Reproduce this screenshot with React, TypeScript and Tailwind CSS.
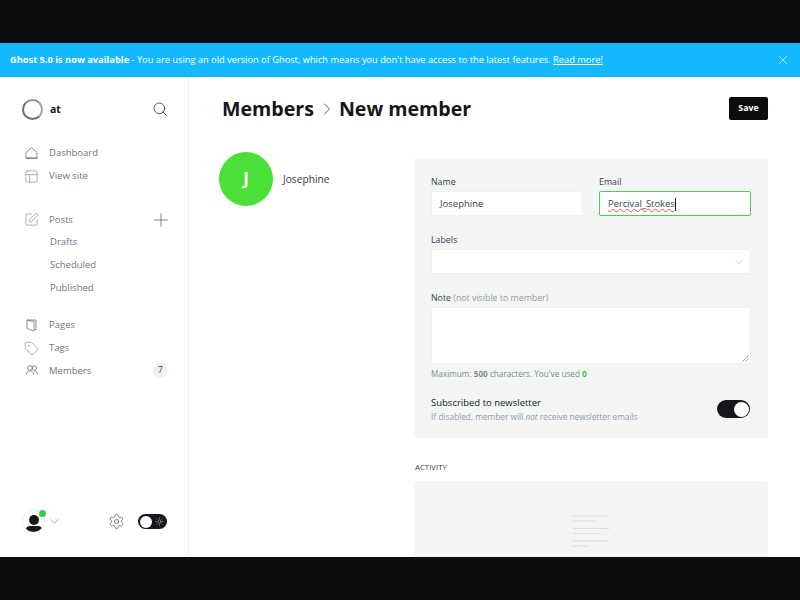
import React from 'react';
import { Search, Plus, X, ChevronDown, ChevronRight, PanelsTopLeft, SquarePen, Tag, Settings, Sun } from 'lucide-react';

const NavItem: React.FC<{ icon: React.ReactNode; label: string; right?: React.ReactNode }> = ({ icon, label, right }) => (
  <div className="flex h-[22.7px] items-center text-[9.5px] text-[#6b7580]">
    <span className="flex w-[25px] shrink-0 items-center justify-start text-[#6b7580]">{icon}</span>
    <span>{label}</span>
    {right && <span className="ml-auto flex items-center">{right}</span>}
  </div>
);

const SubItem: React.FC<{ label: string }> = ({ label }) => (
  <div className="flex h-[22.7px] items-center pl-[26px] text-[9.5px] text-[#6b7580]">{label}</div>
);

const HomeIcon = () => (
  <svg width="15" height="15" viewBox="0 0 15 15" fill="none" stroke="currentColor" strokeWidth="0.8">
    <path d="M2 6.5 L7.5 1.5 L13 6.5 V12.5 H2 Z" />
    <path d="M2 11.8 H13" />
  </svg>
);

const PagesIcon = () => (
  <svg width="15" height="15" viewBox="0 0 15 15" fill="none" stroke="currentColor" strokeWidth="0.8">
    <path d="M3 2 H12 V11.5 H10.5 M3 2 V10.5 L10 13 V3.5 L3 2" />
  </svg>
);

const MembersIcon = () => (
  <svg width="15" height="15" viewBox="0 0 15 15" fill="none" stroke="currentColor" strokeWidth="0.8">
    <circle cx="6" cy="5" r="2.3" />
    <circle cx="10.5" cy="5" r="2.3" />
    <path d="M2.5 11.5 C2.5 9 4 8 6 8 S9.5 9 9.5 11.5 M10 8 C12 8 13.5 9 13.5 11.5" />
  </svg>
);

const Sidebar = () => (
  <aside className="flex w-[189px] shrink-0 flex-col border-r border-[#eceef0] pl-[22px] pr-[20px]">
    <div className="mt-[21px] flex h-[22px] items-center">
      <span className="h-[21px] w-[21px] rounded-full border-[2.5px] border-[#6b6f73] border-t-[#8b8f93] border-r-[#a0a3a6]" />
      <span className="ml-[7px] pt-[1px] text-[10.5px] font-bold text-[#15171a]">at</span>
      <Search size={16} strokeWidth={1.1} className="ml-auto mr-[0px] text-[#15171a]" />
    </div>
    <nav className="mt-[22px] pl-[2px]">
      <NavItem icon={<HomeIcon />} label="Dashboard" />
      <NavItem icon={<PanelsTopLeft size={15} strokeWidth={0.9} />} label="View site" />
      <div className="h-[21px]" />
      <NavItem
        icon={<SquarePen size={15} strokeWidth={0.9} />}
        label="Posts"
        right={<Plus size={22} strokeWidth={0.7} className="mr-[-4px] text-[#394047]" />}
      />
      <SubItem label="Drafts" />
      <SubItem label="Scheduled" />
      <SubItem label="Published" />
      <div className="h-[15px]" />
      <NavItem icon={<PagesIcon />} label="Pages" />
      <NavItem icon={<Tag size={15} strokeWidth={0.9} />} label="Tags" />
      <NavItem
        icon={<MembersIcon />}
        label="Members"
        right={
          <span className="flex h-[15px] w-[15px] items-center justify-center rounded-full bg-[#eff1f3] text-[8.5px] text-[#394047]">7</span>
        }
      />
    </nav>
    <div className="mt-auto mb-[24px] flex items-center pr-[1px]">
      <div className="relative h-[23px] w-[23px]">
        <div className="flex h-[23px] w-[23px] flex-col items-center overflow-hidden rounded-full border border-[#f0f1f2] pt-[4px]">
          <span className="h-[10px] w-[10px] shrink-0 rounded-full bg-[#15171a]" />
          <span className="mt-[0.5px] h-[8px] w-[16px] shrink-0 rounded-full bg-[#15171a]" />
        </div>
        <span className="absolute right-[-1px] top-[0px] h-[7px] w-[7px] rounded-full bg-[#30cf43]" />
      </div>
      <ChevronDown size={15} strokeWidth={0.9} className="ml-[2px] text-[#626d79]" />
      <Settings size={17} strokeWidth={0.9} className="ml-auto text-[#394047]" />
      <div className="ml-[13px] flex h-[15px] w-[29px] items-center justify-between rounded-full bg-[#15171a] pl-[1.5px] pr-[3px]">
        <span className="h-[12px] w-[12px] rounded-full bg-white" />
        <Sun size={9} strokeWidth={1.4} className="text-[#c8ccd0]" />
      </div>
    </div>
  </aside>
);

const Label: React.FC<{ children: React.ReactNode }> = ({ children }) => (
  <div className="text-[8.8px] leading-[13px] text-[#394047]">{children}</div>
);

const MemberForm = () => (
  <section className="flex h-[280px] w-[354px] flex-col rounded-[2px] bg-[#f4f5f5] px-[17px] pt-[18px]">
    <div className="grid grid-cols-2 gap-[16px]">
      <div>
        <Label>Name</Label>
        <div className="mt-[2px] flex h-[25px] items-center rounded-[2px] border border-[#eef0f1] bg-white pl-[8px] pt-[1px] text-[9.5px] text-[#394047]">Josephine</div>
      </div>
      <div>
        <Label>Email</Label>
        <div className="mt-[2px] flex h-[25px] items-center rounded-[2px] border-[1.5px] border-[#45d04f] bg-white pl-[8px] pt-[1px] text-[9.4px] text-[#394047]">
          <span className="underline decoration-[#e25440] decoration-wavy decoration-[0.5px]">Percival_Stokes</span>
          <span className="h-[13px] w-px bg-[#15171a]" />
        </div>
      </div>
    </div>
    <div className="mt-[18px]">
      <Label>Labels</Label>
      <div className="mt-[2px] flex h-[25px] items-center justify-end rounded-[2px] border border-[#eef0f1] bg-white pr-[4px]">
        <ChevronDown size={14} strokeWidth={0.9} className="text-[#aeb4ba]" />
      </div>
    </div>
    <div className="mt-[18px]">
      <Label>
        Note <span className="text-[#8e9cac]">(not visible to member)</span>
      </Label>
      <div className="relative mt-[2px] h-[57px] rounded-[2px] border border-[#eef0f1] bg-white">
        <svg className="absolute bottom-[1px] right-[1px]" width="7" height="7" viewBox="0 0 7 7" stroke="#777" strokeWidth="0.7">
          <path d="M0.5 6.5 L6.5 0.5 M3.5 6.5 L6.5 3.5" />
        </svg>
      </div>
      <div className="mt-[4px] text-[8.2px] leading-[12px] text-[#7c8b9a]">
        Maximum: <b className="font-bold">500</b> characters. You've used <b className="font-bold text-[#30cf43]">0</b>
      </div>
    </div>
    <div className="mt-[15px] flex items-center justify-between">
      <div className="pt-[1px]">
        <div className="text-[9.5px] leading-[13px] text-[#15171a]">Subscribed to newsletter</div>
        <div className="mt-[1px] text-[8.3px] leading-[13px] text-[#8e9cac]">
          If disabled, member will <i>not</i> receive newsletter emails
        </div>
      </div>
      <div className="mr-[1px] flex h-[18px] w-[33px] items-center justify-end rounded-full bg-[#15171a] pr-[1.5px]">
        <span className="h-[15px] w-[15px] rounded-full bg-white" />
      </div>
    </div>
  </section>
);

const ActivityEmpty = () => (
  <svg width="37" height="37" viewBox="0 0 37 37" stroke="#d9dce0" strokeWidth="1.2">
    <path d="M0 1 H36 M0 6 H22 M0 13.5 H36 M0 18.5 H28 M0 26 H36 M0 31 H16" />
  </svg>
);

export default function App() {
  return (
    <div className="flex h-screen flex-col overflow-hidden bg-[#0c0c0c] font-['Open_Sans','Noto_Sans',sans-serif]">
      <div className="h-[43px] shrink-0" />
      <div className="flex h-[34px] shrink-0 items-center bg-[#14b8ff] pl-[10px] pr-[9px] text-[9.28px] text-white">
        <span>
          <b className="font-bold">Ghost 5.0 is now available</b> - You are using an old version of Ghost, which means you don't have access to the latest features.{' '}
          <span className="underline">Read more!</span>
        </span>
        <X size={16} strokeWidth={0.9} className="ml-auto" />
      </div>
      <div className="flex h-[480px] shrink-0 overflow-hidden bg-white">
        <Sidebar />
        <main className="min-w-0 flex-1 overflow-hidden pl-[33px] pr-[32px]">
          <header className="mt-[18px] flex h-[27px] items-center justify-between">
            <h1 className="flex items-center text-[19.6px] font-bold text-[#15171a]">
              Members
              <ChevronRight size={20} strokeWidth={1} className="ml-[3px] mr-[2px] text-[#394047]" />
              New member
            </h1>
            <button className="flex h-[23px] w-[39px] items-center justify-center rounded-[2px] bg-[#0c0c0c] text-[8.8px] font-bold text-white">Save</button>
          </header>
          <div className="mt-[30px] flex">
            <div className="ml-[-3px] flex w-[195px] shrink-0 items-start">
              <div className="flex h-[54px] w-[54px] items-center justify-center rounded-full bg-[#4ae038] text-[17px] font-bold text-white">J</div>
              <div className="ml-[10px] mt-[19px] text-[10.2px] font-medium leading-[16px] text-[#394047]">Josephine</div>
            </div>
            <div className="mt-[6px]">
              <MemberForm />
              <div className="mt-[24px] pl-[1px] text-[7.8px] leading-[11px] text-[#394047]">ACTIVITY</div>
              <div className="mt-[8px] flex h-[100px] justify-center rounded-[2px] bg-[#f4f5f5] pt-[34px]">
                <ActivityEmpty />
              </div>
            </div>
          </div>
        </main>
      </div>
    </div>
  );
}
